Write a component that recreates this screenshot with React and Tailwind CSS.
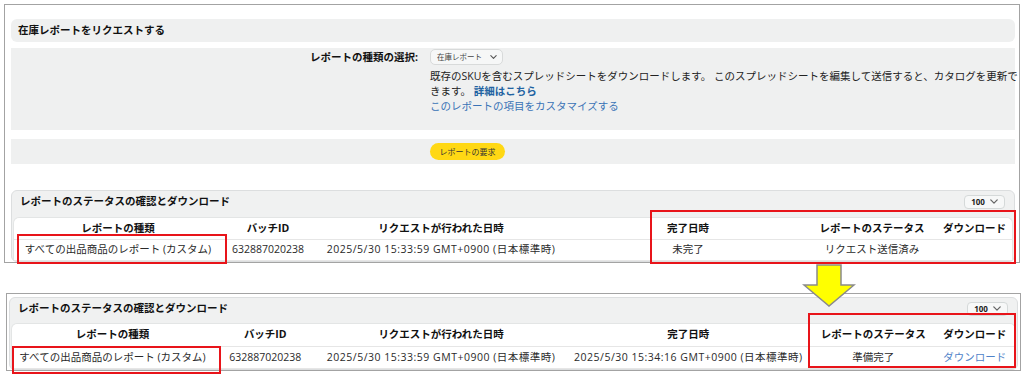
import React from "react";

const Chevron = ({ className }) => (
  <svg viewBox="0 0 10 6" className={className} fill="none" stroke="currentColor" strokeWidth="1.6" strokeLinecap="round" strokeLinejoin="round">
    <path d="M1 1l4 4 4-4" />
  </svg>
);

const HEAD = ["レポートの種類", "バッチID", "リクエストが行われた日時", "完了日時", "レポートのステータス", "ダウンロード"];

const DateText = ({ children }) => <span className="tracking-[0.5px]">{children}</span>;

function StatusPanel({ cols, row, titleH, headH, rowH, className }) {
  return (
    <div className={"rounded-md border border-[#dcdedf] bg-[#f0f1f1] px-[1px] " + className}>
      <div className={"flex items-center justify-between pl-[7px] pr-[8px] " + titleH}>
        <span className="font-bold text-[#111]">レポートのステータスの確認とダウンロード</span>
        <div className="flex h-[14px] w-[41px] items-center justify-center gap-[5px] rounded-[4px] border border-[#d5d9d9] bg-[#f7f8f8] text-[8px] font-bold text-[#222]">
          <span>100</span>
          <Chevron className="h-[5px] w-[8px] text-[#666]" />
        </div>
      </div>
      <div className="rounded-t-md border border-b-0 border-[#e3e5e5] bg-white">
        <table className="w-full table-fixed border-collapse">
          <colgroup>
            {cols.map((c, i) => (
              <col key={i} className={c} />
            ))}
          </colgroup>
          <thead>
            <tr className={"border-b border-[#e6e6e6] " + headH}>
              {HEAD.map((h) => (
                <th key={h} className="p-0 text-center font-bold text-[#111]">
                  {h}
                </th>
              ))}
            </tr>
          </thead>
          <tbody>
            <tr className={"border-b border-[#e6e6e6] " + rowH}>
              {row.map((d, i) => (
                <td key={i} className="whitespace-nowrap p-0 text-center text-[#2a2a2a]">
                  {d}
                </td>
              ))}
            </tr>
          </tbody>
        </table>
      </div>
    </div>
  );
}

export default function App() {
  return (
    <div className="relative h-[379px] w-[1024px] overflow-hidden bg-white font-['Open_Sans','Noto_Sans_CJK_JP',sans-serif] text-[10.5px] leading-[15px] text-[#222]">
      {/* top screenshot */}
      <div className="ml-[4px] mt-[4px] h-[259px] w-[1016px] overflow-hidden border border-[#a3a3a3] pl-[6px] pr-[4px] pt-[14px]">
        <div className="flex h-[23px] items-center rounded-md bg-[#eff0f0] pl-[7px] font-bold text-[#111]">
          在庫レポートをリクエストする
        </div>
        <div className="mt-[6px] grid h-[82px] grid-cols-[407px_1fr] gap-x-[12px] bg-[#eff0f0]">
          <div className="pt-[1px] text-right font-bold leading-[17px] text-[#111]">レポートの種類の選択:</div>
          <div className="pt-[1px]">
            <div className="flex h-[16px] w-[73px] items-center justify-between rounded-[5px] border border-[#d8dada] bg-[#f6f7f7] pl-[6px] pr-[5px] text-[7.5px] text-[#444]">
              <span>在庫レポート</span>
              <Chevron className="h-[4px] w-[7px] text-[#555]" />
            </div>
            <div className="mt-[4px] whitespace-nowrap text-[#222]">
              既存のSKUを含むスプレッドシートをダウンロードします。 このスプレッドシートを編集して送信すると、カタログを更新で
              <br />
              きます。 <span className="font-bold text-[#2162a1]">詳細はこちら</span>
              <br />
              <span className="text-[#3a73b6]">このレポートの項目をカスタマイズする</span>
            </div>
          </div>
        </div>
        <div className="mt-[9px] flex h-[25px] items-start bg-[#eff0f0] pl-[419px] pt-[4px]">
          <div className="flex h-[17px] w-[75px] items-center justify-center rounded-full bg-[#ffd814] text-[8px] text-[#333]">
            レポートの要求
          </div>
        </div>
        <StatusPanel
          className="mt-[26px]"
          titleH="h-[26px] pb-[5px]"
          headH="h-[21px]"
          rowH="h-[21px]"
          cols={["w-[208px]", "w-[92px]", "w-[254px]", "w-[240px]", "w-[128px]", "w-[77px]"]}
          row={[
            "すべての出品商品のレポート (カスタム)",
            "632887020238",
            <DateText key="a">2025/5/30 15:33:59 GMT+0900 (日本標準時)</DateText>,
            "未完了",
            "リクエスト送信済み",
            "",
          ]}
        />
      </div>

      {/* bottom screenshot */}
      <div className="ml-[6px] mt-[30px] h-[78px] w-[1015px] overflow-hidden border border-[#a3a3a3] px-[2px] pt-[3px]">
        <StatusPanel
          className=""
          titleH="h-[25px] pb-[4px]"
          headH="h-[22px]"
          rowH="h-[22px]"
          cols={["w-[200px]", "w-[104px]", "w-[246px]", "w-[246px]", "w-[122px]", "w-[80px]"]}
          row={[
            "すべての出品商品のレポート (カスタム)",
            "632887020238",
            <DateText key="a">2025/5/30 15:33:59 GMT+0900 (日本標準時)</DateText>,
            <DateText key="b">2025/5/30 15:34:16 GMT+0900 (日本標準時)</DateText>,
            "準備完了",
            <span key="d" className="text-[#4f83c9]">ダウンロード</span>,
          ]}
        />
      </div>

      {/* annotations */}
      <div className="absolute left-[17px] top-[234px] h-[30px] w-[210px] border-2 border-[#e8141a]" />
      <div className="absolute left-[650px] top-[210px] h-[54px] w-[366px] border-2 border-[#e8141a]" />
      <div className="absolute left-[12px] top-[346px] h-[28px] w-[209px] border-2 border-[#e8141a]" />
      <div className="absolute left-[808px] top-[313px] h-[55px] w-[208px] border-2 border-[#e8141a]" />
      <svg className="absolute left-[802px] top-[263px]" width="54" height="45" viewBox="0 0 54 45">
        <polygon points="15,2 39,2 39,22 52,22 27,43 2,22 15,22" fill="#ffff00" stroke="#8a8a8a" strokeWidth="1.5" strokeLinejoin="miter" />
      </svg>
    </div>
  );
}
